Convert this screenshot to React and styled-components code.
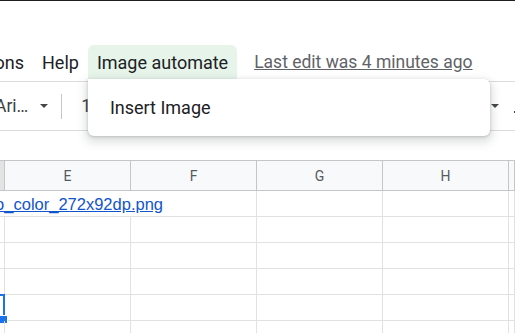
import React from 'react';
import styled, { createGlobalStyle } from 'styled-components';

const GlobalStyle = createGlobalStyle`
  html, body {
    margin: 0;
    padding: 0;
    background: #fff;
  }
  body {
    font-family: Roboto, "Noto Sans", sans-serif;
  }
`;

const Page = styled.div`
  width: 515px;
  height: 333px;
  overflow: hidden;
  border-top: 1px solid #1f1f1f;
  box-sizing: border-box;
  background: #fff;
`;

const TitleArea = styled.div`
  height: 44px;
`;

const MenuBar = styled.div`
  display: flex;
  align-items: flex-start;
  height: 36px;
`;

const MenuClip = styled.div`
  display: flex;
  justify-content: flex-end;
  width: 33px;
  overflow: hidden;
  flex-shrink: 0;
`;

const MenuItem = styled.div`
  position: relative;
  flex-shrink: 0;
  display: flex;
  align-items: center;
  height: 34px;
  padding: 0 9px;
  font-size: 18px;
  color: #202124;
  white-space: nowrap;
  border-radius: 6px 6px 0 0;
  background: ${({ active }) => (active ? '#e6f4ea' : 'transparent')};
`;

const LastEdit = styled.div`
  display: flex;
  align-items: center;
  height: 34px;
  margin-left: 17px;
  font-size: 17.5px;
  color: #5f6368;
  text-decoration: underline;
  white-space: nowrap;
`;

const Dropdown = styled.div`
  position: absolute;
  top: 100%;
  left: 0;
  z-index: 5;
  width: 402px;
  height: 57px;
  box-sizing: border-box;
  display: flex;
  align-items: center;
  padding-left: 22px;
  background: #fff;
  border-radius: 0 6px 6px 6px;
  box-shadow: 0 4px 8px 3px rgba(60, 64, 67, 0.15), 0 1px 3px rgba(60, 64, 67, 0.25);
`;

const DropdownItem = styled.div`
  font-size: 18px;
  color: #202124;
`;

const Toolbar = styled.div`
  display: flex;
  align-items: center;
  height: 50px;
  box-sizing: border-box;
  border-top: 1px solid #dadce0;
  border-bottom: 1px solid #dadce0;
`;

const FontName = styled.div`
  margin-left: -5px;
  white-space: nowrap;
  font-size: 17.5px;
  color: #3c4043;
`;

const Caret = styled.div`
  width: 0;
  height: 0;
  margin-left: ${({ gap }) => gap}px;
  border-left: 4px solid transparent;
  border-right: 4px solid transparent;
  border-top: 4px solid #444746;
`;

const Divider = styled.div`
  width: 1px;
  height: 25px;
  margin-left: 13px;
  background: #c7c7c7;
`;

const FontSize = styled.div`
  margin-left: 19px;
  font-size: 17.5px;
  color: #3c4043;
`;

const RightTools = styled.div`
  display: flex;
  align-items: center;
  margin-left: auto;
  margin-right: -3px;
`;

const IconStub = styled.div`
  width: 4px;
  height: 2px;
  margin-left: 15px;
  margin-top: 12px;
  background: #444746;
`;

const FormulaGap = styled.div`
  height: 29px;
`;

const Row = styled.div`
  display: grid;
  grid-template-columns: 5px repeat(4, 126px) 1fr;
  height: ${({ header }) => (header ? 31 : 26)}px;
  box-sizing: border-box;
  border-top: ${({ header }) => (header ? '1px solid #c4c7c5' : 'none')};
  border-bottom: 1px solid ${({ header }) => (header ? '#c4c7c5' : '#e1e1e1')};
  background: ${({ header }) => (header ? '#f8f9fa' : '#fff')};
`;

const Cell = styled.div`
  position: relative;
  box-sizing: border-box;
  border-right: 1px solid ${({ header }) => (header ? '#c4c7c5' : '#e1e1e1')};
  grid-column: ${({ span }) => (span ? `span ${span}` : 'auto')};
  display: flex;
  align-items: ${({ header }) => (header ? 'center' : 'flex-end')};
  justify-content: ${({ header }) => (header ? 'center' : 'flex-start')};
  background: ${({ selected }) => (selected ? '#e3e3e3' : 'transparent')};
  font-size: 14px;
  color: #575a5e;
`;

const LinkClip = styled.div`
  display: flex;
  justify-content: flex-end;
  width: 163px;
  overflow: hidden;
  padding-bottom: 2px;
`;

const Link = styled.span`
  flex-shrink: 0;
  font-family: "Liberation Sans", Arial, sans-serif;
  font-size: 16.5px;
  color: #1155cc;
  text-decoration: underline;
  white-space: nowrap;
`;

const Selection = styled.div`
  position: absolute;
  top: -1px;
  left: -3px;
  right: -1px;
  bottom: -1px;
  border: 2px solid #1a73e8;
  pointer-events: none;
`;

const FillHandle = styled.div`
  position: absolute;
  left: -1px;
  top: 20px;
  width: 7px;
  height: 7px;
  background: #1a73e8;
  border: 1px solid #fff;
`;

const columns = ['E', 'F', 'G', 'H'];

const App = () => {
  const bodyRows = [0, 1, 2, 3, 4, 5];

  return (
    <>
      <GlobalStyle />
      <Page>
        <TitleArea />
        <MenuBar>
          <MenuClip>
            <MenuItem>Extensions</MenuItem>
          </MenuClip>
          <MenuItem>Help</MenuItem>
          <MenuItem active>
            Image automate
            <Dropdown>
              <DropdownItem>Insert Image</DropdownItem>
            </Dropdown>
          </MenuItem>
          <LastEdit>Last edit was 4 minutes ago</LastEdit>
        </MenuBar>

        <Toolbar>
          <FontName>Ari…</FontName>
          <Caret gap={12} />
          <Divider />
          <FontSize>10</FontSize>
          <RightTools>
            <Caret gap={0} />
            <IconStub />
          </RightTools>
        </Toolbar>

        <FormulaGap />

        <Row header>
          <Cell header selected />
          {columns.map((c) => (
            <Cell header key={c}>{c}</Cell>
          ))}
          <Cell header />
        </Row>

        {bodyRows.map((r) =>
          r === 0 ? (
            <Row key={r}>
              <Cell span={3}>
                <LinkClip>
                  <Link>googlelogo_color_272x92dp.png</Link>
                </LinkClip>
              </Cell>
              <Cell />
              <Cell />
              <Cell />
            </Row>
          ) : (
            <Row key={r}>
              <Cell>
                {r === 4 && (
                  <>
                    <Selection />
                    <FillHandle />
                  </>
                )}
              </Cell>
              {columns.map((c) => (
                <Cell key={c} />
              ))}
              <Cell />
            </Row>
          )
        )}
      </Page>
    </>
  );
};

export default App;
